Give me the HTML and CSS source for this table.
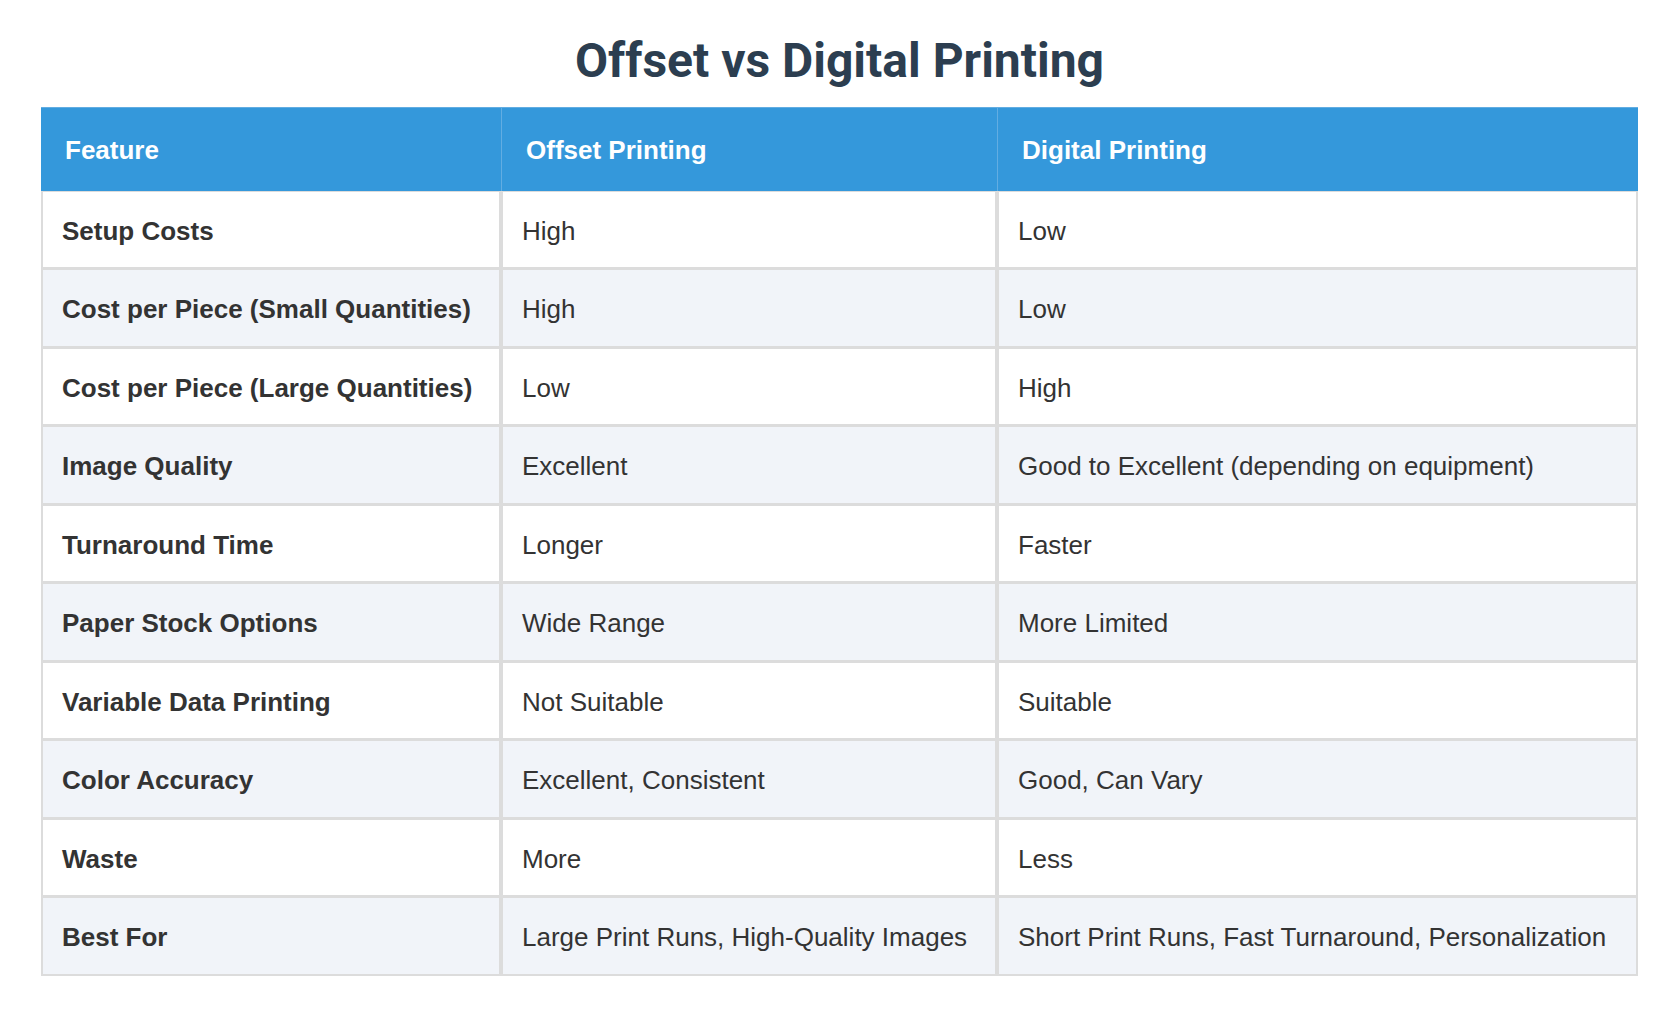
FILE: index.html
```html
<!DOCTYPE html>
<html lang="en">
<head>
<meta charset="utf-8">
<title>Offset vs Digital Printing</title>
<link rel="stylesheet" href="styles.css">
</head>
<body>
<main class="page">
  <h1 class="title">Offset vs Digital Printing</h1>
  <table class="compare">
    <colgroup>
      <col class="c1">
      <col class="c2">
      <col class="c3">
    </colgroup>
    <thead>
      <tr><th>Feature</th><th>Offset Printing</th><th>Digital Printing</th></tr>
    </thead>
    <tbody>
      <tr><td>Setup Costs</td><td>High</td><td>Low</td></tr>
      <tr><td>Cost per Piece (Small Quantities)</td><td>High</td><td>Low</td></tr>
      <tr><td>Cost per Piece (Large Quantities)</td><td>Low</td><td>High</td></tr>
      <tr><td>Image Quality</td><td>Excellent</td><td>Good to Excellent (depending on equipment)</td></tr>
      <tr><td>Turnaround Time</td><td>Longer</td><td>Faster</td></tr>
      <tr><td>Paper Stock Options</td><td>Wide Range</td><td>More Limited</td></tr>
      <tr><td>Variable Data Printing</td><td>Not Suitable</td><td>Suitable</td></tr>
      <tr><td>Color Accuracy</td><td>Excellent, Consistent</td><td>Good, Can Vary</td></tr>
      <tr><td>Waste</td><td>More</td><td>Less</td></tr>
      <tr><td>Best For</td><td>Large Print Runs, High-Quality Images</td><td>Short Print Runs, Fast Turnaround, Personalization</td></tr>
    </tbody>
  </table>
</main>
</body>
</html>
```

FILE: styles.css
```css
* { box-sizing: border-box; }

html, body {
  margin: 0;
  padding: 0;
  background: #ffffff;
}

body {
  font-family: "Liberation Sans", Arial, sans-serif;
  color: #333333;
}

.page {
  padding: 32px 42px 40px 41px;
}

.title {
  margin: 0 0 18px;
  font-family: Roboto, "Liberation Sans", sans-serif;
  font-weight: 700;
  font-size: 48px;
  line-height: normal;
  text-align: center;
  color: #2c3e50;
}

.compare {
  width: 100%;
  table-layout: fixed;
  border-collapse: separate;
  border-spacing: 0;
  font-size: 26px;
  line-height: 30px;
}

.compare .c1 { width: 460px; }
.compare .c2 { width: 496px; }

.compare th {
  background: #3498db;
  color: #ffffff;
  font-weight: 700;
  text-align: left;
  padding: 27px 23px 26px 24px;
  border-top: 1px solid #62ade2;
}

.compare th + th {
  border-left: 1px solid #62ade2;
}

.compare td {
  padding: 24px 18px 21px 19px;
  border-left: 2px solid #dcdcdc;
  border-right: 2px solid #dcdcdc;
  border-top: 1px solid #dcdcdc;
  border-bottom: 2px solid #dcdcdc;
  background: #ffffff;
}

.compare td:first-child {
  font-weight: 700;
}

.compare tbody tr:nth-child(even) td {
  background: #f1f4f9;
  padding-bottom: 22px;
}
```
